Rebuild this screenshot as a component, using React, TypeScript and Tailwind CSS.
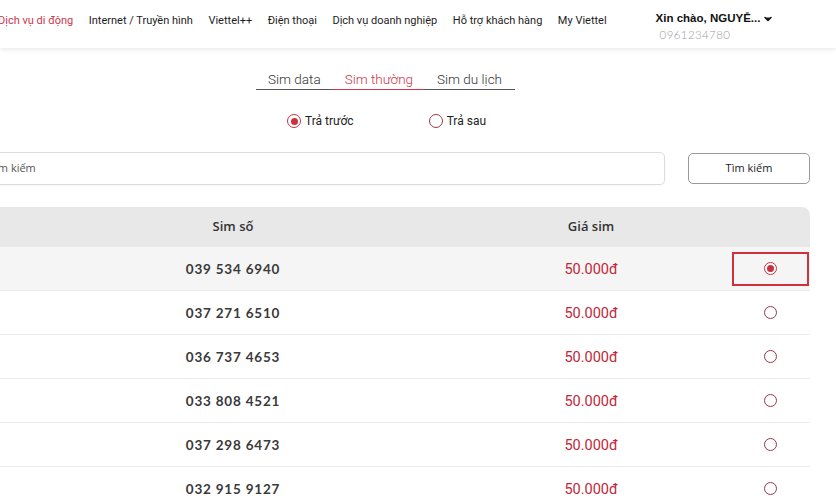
import { ChevronDown } from "lucide-react";

const navItems = [
  "Dịch vụ di động",
  "Internet / Truyền hình",
  "Viettel++",
  "Điện thoại",
  "Dịch vụ doanh nghiệp",
  "Hỗ trợ khách hàng",
  "My Viettel",
];

const sims = [
  { number: "039 534 6940", price: "50.000đ" },
  { number: "037 271 6510", price: "50.000đ" },
  { number: "036 737 4653", price: "50.000đ" },
  { number: "033 808 4521", price: "50.000đ" },
  { number: "037 298 6473", price: "50.000đ" },
  { number: "032 915 9127", price: "50.000đ" },
];

function Radio({ checked, size = "md" }: { checked: boolean; size?: "sm" | "md" }) {
  const box = size === "md" ? "h-[14px] w-[14px]" : "h-[13px] w-[13px]";
  return (
    <span
      className={`flex ${box} items-center justify-center rounded-full border ${
        checked ? "border-[#c8313f] border-[1.5px]" : "border-[#9a3a44]"
      } bg-white`}
    >
      {checked && <span className="h-[7px] w-[7px] rounded-full bg-[#c8313f]" />}
    </span>
  );
}

export default function App() {
  return (
    <div className="h-[496px] w-[836px] overflow-hidden bg-white font-['Roboto',sans-serif] text-[#222]">
      {/* Top navigation */}
      <header className="relative z-10 flex h-[48px] items-start bg-white shadow-[0_2px_4px_rgba(0,0,0,0.08)]">
        <nav className="-ml-[2px] mt-[13px] flex items-center gap-[15.5px] text-[11px] text-[#1d1d1d]">
          {navItems.map((item, i) => (
            <span key={item} className={i === 0 ? "text-[#c8374b]" : ""}>
              {item}
            </span>
          ))}
        </nav>
        <div className="ml-[49px] mt-[10px] flex flex-col items-start">
          <div className="flex items-center gap-[2px] font-['Liberation_Sans',sans-serif] text-[11.5px] font-bold text-[#111]">
            Xin chào, NGUYỄ...
            <ChevronDown className="h-[12px] w-[12px] fill-[#222]" strokeWidth={3} />
          </div>
          <div className="-mt-[1px] ml-[4px] font-['Lato',sans-serif] text-[11.5px] font-light tracking-[0.4px] text-[#9a9a9a]">
            0961234780
          </div>
        </div>
      </header>

      {/* Sim type tabs */}
      <div className="ml-[256px] mt-[23px] flex w-[259px] border-b border-[#555] text-[13.5px] font-light leading-[17px]">
        <div className="px-[12px] pb-[1px] text-[#333]">Sim data</div>
        <div className="-mb-px border-b border-[#c8374b] px-[12px] pb-[1px] text-[#c8374b]">Sim thường</div>
        <div className="px-[12px] pb-[1px] text-[#333]">Sim du lịch</div>
      </div>

      {/* Payment type */}
      <div className="mt-[22px] flex items-center">
        <label className="ml-[287px] flex items-center gap-[4px] text-[12px] text-[#222]">
          <Radio checked />
          Trả trước
        </label>
        <label className="ml-[75px] flex items-center gap-[4px] text-[12px] text-[#222]">
          <Radio checked={false} />
          Trả sau
        </label>
      </div>

      {/* Search */}
      <div className="mt-[22px] flex items-center">
        <div className="-ml-[24px] flex h-[33px] w-[689px] items-center rounded-[5px] border border-[#dcdcdc] pl-[12px] font-['Open_Sans',sans-serif] text-[11px] text-[#555] shadow-[0_1px_2px_rgba(0,0,0,0.04)]">
          Tìm kiếm
        </div>
        <button className="ml-[23px] h-[31px] w-[122px] rounded-[5px] border border-[#9a9a9a] bg-white font-['Open_Sans',sans-serif] text-[11px] text-[#222]">
          Tìm kiếm
        </button>
      </div>

      {/* Sim list */}
      <div className="mt-[22px] w-[810px] font-['Lato',sans-serif]">
        <div className="grid h-[40px] grid-cols-[452px_278px_1fr] items-center rounded-tr-[8px] bg-[#e8e8e8] text-[13px] font-semibold text-[#333]">
          <div className="pl-[14px] text-center font-['Open_Sans',sans-serif]">Sim số</div>
          <div className="text-center font-['Open_Sans',sans-serif]">Giá sim</div>
          <div />
        </div>
        {sims.map((sim, i) => (
          <div
            key={sim.number}
            className={`grid h-[44px] grid-cols-[452px_278px_1fr] items-center border-b border-[#ececec] ${
              i === 0 ? "bg-[#f5f5f5]" : "bg-white"
            }`}
          >
            <div className="pl-[14px] pt-[2px] text-center text-[13.5px] font-bold tracking-[0.8px] text-[#3a3a3a]">
              {sim.number}
            </div>
            <div className="pt-[2px] text-center font-['Roboto',sans-serif] text-[14.5px] text-[#c0283a]">{sim.price}</div>
            <div className="flex justify-center">
              {i === 0 ? (
                <div className="flex h-[34px] w-[77px] items-center justify-center border-2 border-[#d0303a]">
                  <Radio checked size="sm" />
                </div>
              ) : (
                <Radio checked={false} size="sm" />
              )}
            </div>
          </div>
        ))}
      </div>
    </div>
  );
}
